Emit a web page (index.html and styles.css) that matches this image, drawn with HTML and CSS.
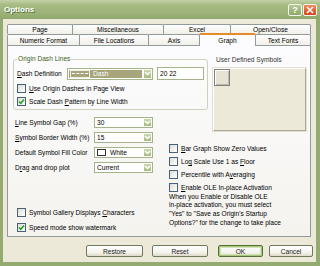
FILE: index.html
```html
<!DOCTYPE html>
<html lang="en">
<head>
    <meta charset="UTF-8">
    <meta name="viewport" content="width=device-width, initial-scale=1.0">
    <title>Options</title>
    <link rel="stylesheet" href="styles.css">
</head>
<body>
    <div class="window">
        <div class="titlebar">
            <span class="title">Options</span>
            <div class="caption-buttons">
                <span class="cap help">?</span>
                <span class="cap close">
                    <svg width="8" height="8" viewBox="0 0 8 8"><path d="M1 1L7 7M7 1L1 7" stroke="#fff" stroke-width="1.6"/></svg>
                </span>
            </div>
        </div>

        <div class="frame">
            <div class="tabs">
                <div class="tab-row back">
                    <div class="tab tab-page">Page</div>
                    <div class="tab tab-misc">Miscellaneous</div>
                    <div class="tab tab-excel">Excel</div>
                    <div class="tab tab-open">Open/Close</div>
                </div>
                <div class="tab-row front">
                    <div class="tab tab-numeric">Numeric Format</div>
                    <div class="tab tab-files">File Locations</div>
                    <div class="tab tab-axis">Axis</div>
                    <div class="tab tab-graph active">Graph</div>
                    <div class="tab tab-fonts">Text Fonts</div>
                </div>
            </div>

            <div class="panel">
                <fieldset class="group">
                    <legend>Origin Dash Lines</legend>
                    <div class="dash-row">
                        <span class="dash-label"><u>D</u>ash Definition</span>
                        <div class="combo dash-combo">
                            <div class="combo-value selected">
                                <span class="dash-sample"></span>
                                <span>Dash</span>
                            </div>
                            <span class="combo-btn"><svg width="7" height="5" viewBox="0 0 7 5"><path d="M1 1L3.5 3.5L6 1" fill="none" stroke="#fff" stroke-width="1.5"/></svg></span>
                        </div>
                        <div class="textbox">20 22</div>
                    </div>
                    <label class="check"><span class="box"></span><span><u>U</u>se Origin Dashes in Page View</span></label>
                    <label class="check"><span class="box checked"><svg width="7" height="7" viewBox="0 0 7 7"><path d="M1 3.5L2.8 5.3L6 1.5" fill="none" stroke="#21a121" stroke-width="1.5"/></svg></span><span>Scale Dash <u>P</u>attern by Line Width</span></label>
                </fieldset>

                <div class="symbols">
                    <div class="symbols-label">User Defined Symbols</div>
                    <div class="symbols-box">
                        <span class="symbol-slot"></span>
                    </div>
                </div>

                <div class="fields">
                    <div class="field">
                        <span class="field-label"><u>L</u>ine Symbol Gap (%)</span>
                        <div class="combo">
                            <div class="combo-value">30</div>
                            <span class="combo-btn"><svg width="7" height="5" viewBox="0 0 7 5"><path d="M1 1L3.5 3.5L6 1" fill="none" stroke="#fff" stroke-width="1.5"/></svg></span>
                        </div>
                    </div>
                    <div class="field">
                        <span class="field-label"><u>S</u>ymbol Border Width (%)</span>
                        <div class="combo">
                            <div class="combo-value">15</div>
                            <span class="combo-btn"><svg width="7" height="5" viewBox="0 0 7 5"><path d="M1 1L3.5 3.5L6 1" fill="none" stroke="#fff" stroke-width="1.5"/></svg></span>
                        </div>
                    </div>
                    <div class="field">
                        <span class="field-label">Default Symbol Fill Color</span>
                        <div class="combo">
                            <div class="combo-value"><span class="swatch"></span>White</div>
                            <span class="combo-btn"><svg width="7" height="5" viewBox="0 0 7 5"><path d="M1 1L3.5 3.5L6 1" fill="none" stroke="#fff" stroke-width="1.5"/></svg></span>
                        </div>
                    </div>
                    <div class="field">
                        <span class="field-label">D<u>r</u>ag and drop plot</span>
                        <div class="combo">
                            <div class="combo-value">Current</div>
                            <span class="combo-btn"><svg width="7" height="5" viewBox="0 0 7 5"><path d="M1 1L3.5 3.5L6 1" fill="none" stroke="#fff" stroke-width="1.5"/></svg></span>
                        </div>
                    </div>
                </div>

                <div class="options">
                    <label class="check"><span class="box"></span><span><u>B</u>ar Graph Show Zero Values</span></label>
                    <label class="check"><span class="box"></span><span>Lo<u>g</u> Scale Use 1 as <u>F</u>loor</span></label>
                    <label class="check"><span class="box"></span><span>Percentile with A<u>v</u>eraging</span></label>
                    <label class="check"><span class="box"></span><span><u>E</u>nable OLE In-place Activation</span></label>
                    <p class="note">When you Enable or Disable OLE<br>in-place activation, you must select<br>"Yes" to "Save as Origin's Startup<br>Options?" for the change to take place</p>
                </div>

                <div class="bottom-checks">
                    <label class="check"><span class="box"></span><span>Symbol Gallery Displays <u>C</u>haracters</span></label>
                    <label class="check"><span class="box checked"><svg width="7" height="7" viewBox="0 0 7 7"><path d="M1 3.5L2.8 5.3L6 1.5" fill="none" stroke="#21a121" stroke-width="1.5"/></svg></span><span>Speed mode show watermark</span></label>
                </div>
            </div>

            <div class="actions">
                <button class="btn btn-restore">Restore</button>
                <button class="btn btn-reset">Reset</button>
                <button class="btn btn-ok default">OK</button>
                <button class="btn btn-cancel">Cancel</button>
            </div>
        </div>
    </div>
</body>
</html>
```

FILE: styles.css
```css
* {
    margin: 0;
    padding: 0;
    box-sizing: border-box;
}

body {
    font-family: "Liberation Sans", Arial, sans-serif;
    font-size: 6.6px;
    color: #000;
    width: 320px;
    height: 266px;
    overflow: hidden;
    background: #ece9d8;
}

.window {
    display: flex;
    flex-direction: column;
    width: 320px;
    height: 266px;
}

/* title bar */
.titlebar {
    height: 19px;
    display: flex;
    align-items: center;
    justify-content: space-between;
    padding: 0 3px 0 4px;
    background: linear-gradient(#c4d2a6 0%, #a7bb83 25%, #9cb278 70%, #8ea86b 100%);
}

.title {
    color: #fff;
    font-weight: bold;
    font-size: 8px;
    text-shadow: 1px 1px 0 #5d7540;
}

.caption-buttons {
    display: flex;
    gap: 1px;
}

.cap {
    width: 14px;
    height: 12px;
    border: 1px solid #f4f6ee;
    border-radius: 2px;
    display: flex;
    align-items: center;
    justify-content: center;
    color: #fff;
    font-weight: bold;
    font-size: 9px;
}

.help {
    background: linear-gradient(#b5c993, #8ea767);
}

.close {
    background: linear-gradient(#ee8a5e, #d5441c);
}

/* frame + client area */
.frame {
    flex: 1;
    display: flex;
    flex-direction: column;
    background: #ece9d8;
    border-style: solid;
    border-color: #93ab71;
    border-width: 0 4px 4px 3px;
    padding: 5px 3px 0 4px;
}

/* tabs */
.tabs {
    display: flex;
    flex-direction: column;
    margin-right: 2px;
}

.tab-row {
    display: flex;
}

.tab {
    border: 1px solid #919b9c;
    border-bottom: none;
    border-radius: 2px 2px 0 0;
    background: linear-gradient(#fefefe, #f0efe8);
    display: flex;
    align-items: center;
    justify-content: center;
    margin-right: -1px;
}

.back .tab {
    height: 10px;
}

.front .tab {
    height: 11px;
}

.tab-page { width: 66px; }
.tab-misc { width: 92px; }
.tab-excel { width: 68px; }
.tab-open { width: 81px; }
.tab-numeric { width: 73px; }
.tab-files { width: 70px; }
.tab-axis { width: 52px; }
.tab-graph { width: 57px; }
.tab-fonts { width: 56px; }

.tab.active {
    position: relative;
    z-index: 1;
    height: 13px;
    margin-top: -1px;
    margin-bottom: -1px;
    background: #fcfcfe;
    border-top: 2px solid #e68b2c;
}

/* tab page */
.panel {
    height: 192px;
    margin-right: 2px;
    border: 1px solid #919b9c;
    background: linear-gradient(#fcfcfe, #f4f3ee);
    padding: 9px 4px 0 5px;
    display: grid;
    grid-template-columns: 153px 44px 96px;
    grid-template-rows: 55px 31px 64px auto;
}

.group {
    grid-column: 1 / 3;
    grid-row: 1;
    margin-right: 2px;
    border: 1px solid #d0d0bf;
    border-radius: 3px;
    padding: 4px 3px 1px 3px;
    min-width: 0;
}

.group legend {
    padding: 0 1px;
    line-height: 8px;
    color: #3f5f1c;
}

.dash-row {
    display: flex;
    align-items: center;
    height: 13px;
    margin-bottom: 2px;
}

.dash-label {
    width: 50px;
}

.check {
    display: flex;
    align-items: center;
    gap: 3px;
    height: 13px;
}

.box {
    width: 9px;
    height: 9px;
    border: 1px solid #4a6079;
    background: linear-gradient(135deg, #dcdcd6, #fff);
    display: flex;
    align-items: center;
    justify-content: center;
}

/* combo boxes */
.combo {
    width: 59px;
    height: 11px;
    display: flex;
    border: 1px solid #a5b38a;
    background: #fff;
}

.combo-value {
    flex: 1;
    display: flex;
    align-items: center;
    gap: 3px;
    padding-left: 2px;
}

.combo-btn {
    width: 9px;
    display: flex;
    align-items: center;
    justify-content: center;
    background: linear-gradient(#c9d8ab, #a6bb80);
    border: 1px solid #fff;
    border-radius: 1px;
}

.dash-combo {
    width: 86px;
    height: 12px;
}

.combo-value.selected {
    background: #a6a57b;
    color: #fff;
    margin: 1px;
    padding-left: 1px;
}

.dash-sample {
    width: 20px;
    height: 8px;
    border: 1px solid #f0f0e4;
    position: relative;
}

.dash-sample::after {
    content: "";
    position: absolute;
    left: 1px;
    right: 1px;
    top: 2px;
    border-top: 1px dashed #fff;
}

.textbox {
    margin-left: 4px;
    width: 47px;
    height: 13px;
    border: 1px solid #a5b38a;
    background: #fff;
    padding-left: 2px;
    display: flex;
    align-items: center;
}

.swatch {
    width: 9px;
    height: 7px;
    border: 1px solid #333;
    background: #fff;
    margin-right: 1px;
}

/* user defined symbols */
.symbols {
    grid-column: 3;
    grid-row: 1 / 3;
    padding-left: 3px;
}

.symbols-label {
    height: 9px;
    line-height: 9px;
    padding-left: 3px;
    color: #333;
}

.symbols-box {
    margin-top: 4px;
    width: 93px;
    height: 63px;
    background: #ece9d8;
    border: 1px solid;
    border-color: #fff #aca899 #aca899 #fff;
    box-shadow: 0 0 0 1px #e2dfcf;
}

.symbol-slot {
    display: block;
    width: 16px;
    height: 17px;
    border: 1px solid #808080;
    box-shadow: inset 1px 1px 0 #fff, inset -1px -1px 0 #bdbab0;
    background: #e6e3d3;
}

/* left field list */
.fields {
    grid-column: 1;
    grid-row: 2 / 4;
    padding: 5px 0 0 2px;
}

.field {
    display: flex;
    align-items: center;
    height: 15px;
}

.field-label {
    width: 79px;
}

/* right option list */
.options {
    grid-column: 2 / 4;
    grid-row: 3 / 5;
    padding: 1px 0 0 3px;
}

.note {
    margin-top: -1.5px;
    line-height: 8.7px;
}

.bottom-checks {
    grid-column: 1;
    grid-row: 4;
    padding-left: 4px;
}

.bottom-checks .check {
    height: 15px;
}

/* dialog buttons */
.actions {
    display: flex;
    justify-content: flex-end;
    margin-top: 8px;
}

.btn {
    height: 12px;
    font-family: inherit;
    font-size: 6.6px;
    color: #222;
    border: 1px solid #6f7a5c;
    border-radius: 2px;
    background: linear-gradient(#fff, #f2f1ea 70%, #dcd8c6);
}

.btn-restore { width: 57px; }
.btn-reset { width: 56px; margin-left: 9px; }
.btn-ok { width: 45px; margin-left: 10px; }
.btn-cancel { width: 44px; margin-left: 6px; }

.btn.default {
    border-color: #55703a;
    box-shadow: inset 0 0 0 1px #a9c77c, inset 0 0 0 2px #d3e3b6;
}
```
